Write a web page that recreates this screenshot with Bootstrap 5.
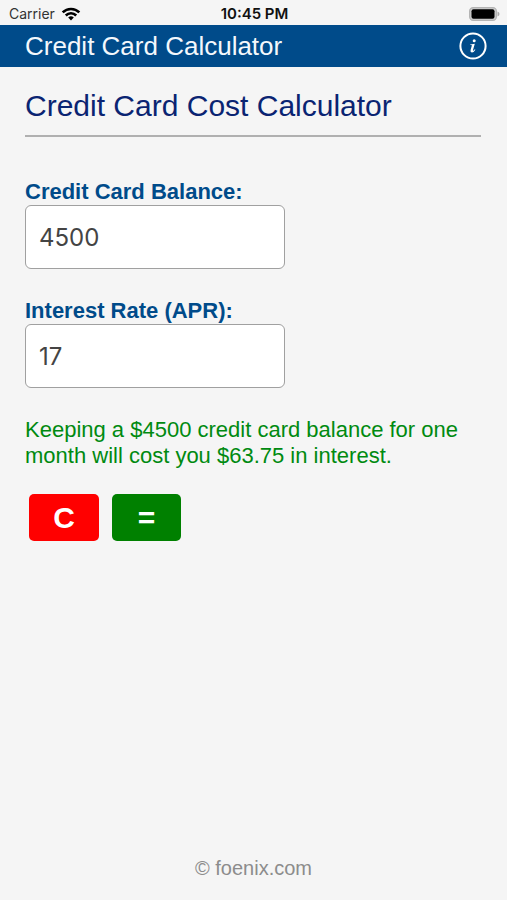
<!DOCTYPE html>
<html lang="en">
<head>
<meta charset="utf-8">
<meta name="viewport" content="width=device-width, initial-scale=1">
<title>Credit Card Calculator</title>
<link href="https://cdn.jsdelivr.net/npm/bootstrap@5.3.0/dist/css/bootstrap.min.css" rel="stylesheet">
<style>
body { background: #f5f5f5; font-family: "Liberation Sans", Arial, sans-serif; font-size: 22px; line-height: 26px; }
.status { height: 25px; padding: 2px 7px 0 9px; font-family: Inter, sans-serif; font-size: 14px; line-height: 24px; color: #333; }
.carrier { gap: 6px; }
.clock { font-size: 15px; font-weight: 600; color: #111; }
.app-bar { height: 42px; padding: 0 20px 0 25px; background: #004b8a; color: #f4f8fc; }
.app-title { font-size: 26px; line-height: 42px; }
main { padding: 20px 26px 0 25px; }
h1 { font-size: 30px; line-height: 38px; color: #0a2472; }
.rule { margin: 10px 0 42px; border-top: 2px solid #b0b0b0; opacity: 1; }
.field-group { margin-bottom: 29px; }
.field-label { color: #004b8a; font-weight: 700; }
.field { width: 260px; height: 64px; padding: 0 13px; border: 1px solid #a0a0a0; border-radius: 6px; font-family: Inter, sans-serif; font-size: 24px; color: #444; }
.field:focus { color: #444; }
.result { margin-bottom: 25px; color: #008a10; }
.keys { gap: 13px; padding-left: 4px; }
.key { height: 47px; padding: 0; border: 0; border-radius: 5px; font-size: 30px; font-weight: 700; line-height: 48px; color: #fff; }
.key-clear { width: 70px; background: #f00; }
.key-equals { width: 69px; background: #008000; }
.key:hover { color: #fff; opacity: .9; }
footer { padding-bottom: 19px; font-size: 20px; color: #8c8c8c; }
</style>
</head>
<body class="d-flex flex-column min-vh-100">
<div class="status row g-0 align-items-center">
  <div class="col d-flex align-items-center carrier">
    <span>Carrier</span>
    <svg width="20" height="14" viewBox="0 0 20 14" fill="none" stroke="#000" stroke-width="2.6" aria-hidden="true">
      <path d="M1.7 5.4A11.7 11.7 0 0 1 18.3 5.4"/>
      <path d="M4.8 8.5A7.3 7.3 0 0 1 15.2 8.5"/>
      <path d="M7.2 10.5A4 4 0 0 1 12.8 10.5L10 13.4Z" fill="#000" stroke="none"/>
    </svg>
  </div>
  <div class="col-auto clock">10:45 PM</div>
  <div class="col d-flex justify-content-end">
    <svg width="31" height="14" viewBox="0 0 31 14" aria-hidden="true">
      <rect x=".6" y=".6" width="26.8" height="12.8" rx="3.6" fill="#ccc" stroke="#b4b4b4" stroke-width="1.2"/>
      <rect x="2.5" y="2.3" width="23" height="9.4" rx="2" fill="#000"/>
      <path d="M28.5 4.5Q30.5 5.3 30.5 7T28.5 9.5Z" fill="#aaa"/>
    </svg>
  </div>
</div>
<header class="app-bar d-flex align-items-center justify-content-between">
  <div class="app-title">Credit Card Calculator</div>
  <button type="button" class="btn p-0 border-0 d-flex" aria-label="Information">
    <svg width="28" height="28" viewBox="0 0 28 28" aria-hidden="true">
      <circle cx="14" cy="14" r="12.6" fill="none" stroke="#fff" stroke-width="2"/>
      <circle cx="15.2" cy="8.7" r="1.5" fill="#fff"/>
      <path d="M11.3 12.4L15.8 11.7L14 18.1Q13.8 19 14.4 18.7Q15.1 18.3 15.8 17.3L16.4 17.8Q14.7 20.7 12.8 20.5Q11 20.3 11.6 18.1L12.8 13.8Q13 13.1 12.3 13.1H11.2Z" fill="#fff"/>
    </svg>
  </button>
</header>
<main class="flex-grow-1">
  <h1 class="fw-normal m-0">Credit Card Cost Calculator</h1>
  <hr class="rule">
  <form>
    <div class="field-group">
      <label class="field-label d-block" for="balance">Credit Card Balance:</label>
      <input class="form-control field" id="balance" type="text" inputmode="decimal" value="4500">
    </div>
    <div class="field-group">
      <label class="field-label d-block" for="apr">Interest Rate (APR):</label>
      <input class="form-control field" id="apr" type="text" inputmode="decimal" value="17">
    </div>
    <p class="result">Keeping a $4500 credit card balance for one month will cost you $63.75 in interest.</p>
    <div class="keys d-flex">
      <button type="button" class="btn key key-clear" aria-label="C, clear">C</button>
      <button type="button" class="btn key key-equals" aria-label="=, calculate">=</button>
    </div>
  </form>
</main>
<footer class="text-center">© foenix.com</footer>
<script src="https://cdn.jsdelivr.net/npm/bootstrap@5.3.0/dist/js/bootstrap.bundle.min.js"></script>
</body>
</html>
